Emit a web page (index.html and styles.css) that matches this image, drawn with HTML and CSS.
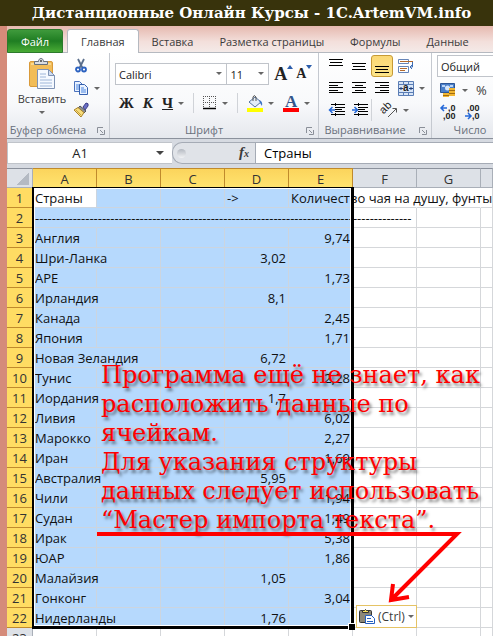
FILE: index.html
```html
<!DOCTYPE html>
<html lang="ru">
<head>
    <meta charset="UTF-8">
    <meta name="viewport" content="width=device-width, initial-scale=1.0">
    <title>Дистанционные Онлайн Курсы</title>
    <link rel="stylesheet" href="styles.css">
</head>
<body>
    <h1 class="banner">Дистанционные Онлайн Курсы - 1C.ArtemVM.info</h1>

    <div class="window">
        <nav class="tabs">
            <button class="tab tab-file">Файл</button>
            <button class="tab tab-active">Главная</button>
            <button class="tab">Вставка</button>
            <button class="tab">Разметка страницы</button>
            <button class="tab">Формулы</button>
            <button class="tab">Данные</button>
        </nav>

        <div class="ribbon">
            <section class="group group-clipboard">
                <div class="group-body">
                    <button class="paste">
                        <svg width="28" height="32" viewBox="0 0 28 32">
                            <rect x="1.500" y="3.500" width="23" height="25" rx="1.500" fill="#f2bd58" stroke="#d99a3a"/>
                            <path d="M3 5h20v2H3z" fill="#f9d78c"/>
                            <path d="M6.500 6.500v-3h4c0-4 5-4 5 0h4v3z" fill="#d9dde2" stroke="#66707c"/>
                            <circle cx="13" cy="3" r="1" fill="#444"/>
                            <path d="M9.500 11.500h11l6 6v13h-17z" fill="#f5f9ff" stroke="#7f93b5"/>
                            <path d="M20.500 11.500v6h6z" fill="#cfdcf0" stroke="#7f93b5"/>
                            <path d="M12 16h6M12 19h6M12 22h12M12 25h12M12 28h12" stroke="#9fb6d8"/>
                        </svg>
                        <span>Вставить</span>
                        <i class="arrow"></i>
                    </button>
                    <div class="clip-tools">
                        <button class="tool" aria-label="Вырезать">
                            <svg width="16" height="16" viewBox="0 0 16 16">
                                <path d="M5 1l4.500 9M11 1L6.500 10" stroke="#5b6f8c" stroke-width="1.800" fill="none"/>
                                <circle cx="5" cy="11.500" r="2" fill="none" stroke="#2c62c0" stroke-width="1.800"/>
                                <circle cx="11" cy="11.500" r="2" fill="none" stroke="#2c62c0" stroke-width="1.800"/>
                            </svg>
                        </button>
                        <button class="tool" aria-label="Копировать">
                            <svg width="16" height="16" viewBox="0 0 16 16">
                                <path d="M1.500 1.500h5l3 3v7h-8z" fill="#eaf2ff" stroke="#4a72bd"/>
                                <path d="M3 5h4M3 7h4M3 9h3" stroke="#4a86e0"/>
                                <path d="M6.500 4.500h5l3 3v7h-8z" fill="#eaf2ff" stroke="#3560ae"/>
                                <path d="M8 8h3M8 10h5M8 12h5" stroke="#4a86e0"/>
                            </svg>
                            <i class="arrow"></i>
                        </button>
                        <button class="tool" aria-label="Формат по образцу">
                            <svg width="16" height="16" viewBox="0 0 16 16">
                                <path d="M10 5l3-4q3 0 2 3l-3 4z" fill="#6a6fc4" stroke="#3d3f8a"/>
                                <path d="M7 4l6 5-2 2-6-5z" fill="#8a8f99" stroke="#555"/>
                                <path d="M5 5.500l6 5-3 4.500-7-7z" fill="#f7dc7a" stroke="#a98229"/>
                                <path d="M3 8l5 5" stroke="#c9a23f"/>
                            </svg>
                        </button>
                    </div>
                </div>
                <footer class="group-label">Буфер обмена
                    <svg class="launcher" width="8" height="8" viewBox="0 0 8 8"><path d="M.5 6V.5H6M3 3l3 3M7.500 3v4.500H3" fill="none" stroke="#8a8f98"/></svg>
                </footer>
            </section>

            <section class="group group-font">
                <div class="group-body rows">
                    <div class="row font-row">
                        <span class="combo combo-font"><select aria-label="Шрифт"><option>Calibri</option></select></span>
                        <span class="combo combo-size"><select aria-label="Размер шрифта"><option>11</option></select></span>
                        <button class="tool letter grow" aria-label="Увеличить размер">A<svg width="6" height="4" viewBox="0 0 6 4"><path d="M0 4l3-4 3 4z" fill="#2b5dab"/></svg></button>
                        <button class="tool letter shrink" aria-label="Уменьшить размер">A<svg width="6" height="4" viewBox="0 0 6 4"><path d="M0 0l3 4 3-4z" fill="#2b5dab"/></svg></button>
                    </div>
                    <div class="row style-row">
                        <button class="tool letter"><b>Ж</b></button>
                        <button class="tool letter"><b><em>К</em></b></button>
                        <button class="tool letter"><b><u>Ч</u></b><i class="arrow"></i></button>
                        <span class="sep"></span>
                        <button class="tool" aria-label="Границы">
                            <svg width="14" height="14" viewBox="0 0 14 14">
                                <path d="M.5 0v13M6.500 0v13M12.500 0v13M0 .5h13M0 6.500h13" stroke="#555" stroke-dasharray="1 1"/>
                                <path d="M0 12.500h13" stroke="#000" stroke-width="1.500"/>
                            </svg>
                            <i class="arrow"></i>
                        </button>
                        <span class="sep"></span>
                        <button class="tool" aria-label="Цвет заливки">
                            <svg width="16" height="17" viewBox="0 0 16 17">
                                <path d="M2 7l6-5 6 5-6 5z" fill="#e3edf8" stroke="#56749f"/>
                                <path d="M6 6V2q1-3 3 0v4" fill="none" stroke="#555"/>
                                <path d="M12 5q4 1 3 6l-2-3z" fill="#3d74c4"/>
                                <path d="M0 13h16v4H0z" fill="#ff0"/>
                            </svg>
                            <i class="arrow"></i>
                        </button>
                        <button class="tool color-tool" aria-label="Цвет текста"><span class="font-color">A</span><i class="arrow"></i></button>
                    </div>
                </div>
                <footer class="group-label">Шрифт
                    <svg class="launcher" width="8" height="8" viewBox="0 0 8 8"><path d="M.5 6V.5H6M3 3l3 3M7.500 3v4.500H3" fill="none" stroke="#8a8f98"/></svg>
                </footer>
            </section>

            <section class="group group-align">
                <div class="group-body align-grid">
                    <button class="tool" aria-label="По верхнему краю"><svg width="14" height="16" viewBox="0 0 14 16"><path d="M0 1.500h14M1 4.500h12M0 7.500h14" stroke="#000"/></svg></button>
                    <button class="tool" aria-label="По середине"><svg width="14" height="16" viewBox="0 0 14 16"><path d="M0 5.500h14M1 8.500h12M0 11.500h14" stroke="#000"/></svg></button>
                    <button class="tool tool-on" aria-label="По нижнему краю"><svg width="14" height="16" viewBox="0 0 14 16"><path d="M0 8.500h14M1 11.500h12M0 14.500h14" stroke="#000"/></svg></button>
                    <button class="tool" aria-label="Перенос текста">
                        <svg width="16" height="16" viewBox="0 0 16 16">
                            <path d="M.5 1.500h10v4H.5zM.5 8.500h10v6H.5z" fill="#fff" stroke="#6685b8"/>
                            <path d="M2 3.500h13M2 10.500h7M2 12.500h5" stroke="#b46a2c"/>
                            <path d="M14.500 4v5h-2M14 7l-2 2 2 2" fill="none" stroke="#3d6cb4"/>
                        </svg>
                    </button>
                    <button class="tool" aria-label="По левому краю"><svg width="14" height="12" viewBox="0 0 14 12"><path d="M0 .5h14M0 3.500h9M0 5.500h14M0 8.500h9M0 10.500h14" stroke="#000"/></svg></button>
                    <button class="tool" aria-label="По центру"><svg width="14" height="12" viewBox="0 0 14 12"><path d="M0 .5h14M3 3.500h8M0 5.500h14M3 8.500h8M0 10.500h14" stroke="#000"/></svg></button>
                    <button class="tool" aria-label="По правому краю"><svg width="14" height="12" viewBox="0 0 14 12"><path d="M0 .5h14M5 3.500h9M0 5.500h14M5 8.500h9M0 10.500h14" stroke="#000"/></svg></button>
                    <button class="tool" aria-label="Объединить">
                        <svg width="16" height="15" viewBox="0 0 16 15">
                            <path d="M.5.500h15v14H.5z" fill="#d8e5f7" stroke="#5a7db5"/>
                            <path d="M5.500 0v3M10.500 0v3M5.500 12v3M10.500 12v3M0 3.500h16M0 11.500h16" stroke="#5a7db5"/>
                            <path d="M1 7.500h4M11 7.500h4M3 6v3M13 6v3" stroke="#23407c"/>
                            <text x="5" y="10" class="icon-text">a</text>
                        </svg>
                        <i class="arrow"></i>
                    </button>
                    <button class="tool" aria-label="Уменьшить отступ"><svg width="16" height="14" viewBox="0 0 16 14"><path d="M2 1.500h14M7 4.500h9M7 6.500h6M7 8.500h9M2 11.500h14" stroke="#000"/><path d="M6.500 0v14" stroke="#000" stroke-dasharray="1 1"/><path d="M6 7H1M3.500 4L.5 7l3 3" fill="none" stroke="#2468d8" stroke-width="1.500"/></svg></button>
                    <button class="tool" aria-label="Увеличить отступ"><svg width="16" height="14" viewBox="0 0 16 14"><path d="M2 1.500h14M7 4.500h9M7 6.500h6M7 8.500h9M2 11.500h14" stroke="#000"/><path d="M6.500 0v14" stroke="#000" stroke-dasharray="1 1"/><path d="M0 7h5M2.500 4l3 3-3 3" fill="none" stroke="#2468d8" stroke-width="1.500"/></svg></button>
                    <button class="tool orientation" aria-label="Ориентация">
                        <svg width="17" height="18" viewBox="0 0 17 18">
                            <text x="2" y="12" class="icon-text icon-ab" transform="rotate(-45 4 12)">ab</text>
                            <path d="M7 16l8-8M11.500 7.500H15.500v4" fill="none" stroke="#555"/>
                        </svg>
                        <i class="arrow"></i>
                    </button>
                </div>
                <footer class="group-label">Выравнивание
                    <svg class="launcher" width="8" height="8" viewBox="0 0 8 8"><path d="M.5 6V.5H6M3 3l3 3M7.500 3v4.500H3" fill="none" stroke="#8a8f98"/></svg>
                </footer>
            </section>

            <section class="group group-number">
                <div class="group-body number-body">
                    <select class="format" aria-label="Числовой формат"><option>Общий</option></select>
                    <div class="row">
                        <button class="tool" aria-label="Финансовый формат">
                            <svg width="17" height="16" viewBox="0 0 17 16">
                                <path d="M.5 1.500h14v9H.5z" fill="#4a7fc9" stroke="#2c5596"/>
                                <path d="M2 3h3v2H2zM10 3h3v2h-3z" fill="#b9d3f5"/>
                                <circle cx="7.500" cy="6" r="2.500" fill="#d6e6fb"/>
                                <path d="M9 6h6v8H9zM3 11h6v4H3z" fill="#f2b632"/>
                                <path d="M9 8.500h6M9 11.500h6M3 13.500h6" stroke="#a06c12"/>
                            </svg>
                            <i class="arrow"></i>
                        </button>
                        <button class="tool percent">%</button>
                    </div>
                    <div class="row">
                        <button class="tool" aria-label="Увеличить разрядность">
                            <svg width="17" height="16" viewBox="0 0 17 16"><path d="M1 4h6M4 1L1 4l3 3" fill="none" stroke="#2468d8" stroke-width="1.500"/><text x="8" y="7" class="icon-text icon-digit">,0</text><text x="3" y="15" class="icon-text icon-digit">,00</text></svg>
                        </button>
                        <button class="tool" aria-label="Уменьшить разрядность">
                            <svg width="17" height="16" viewBox="0 0 17 16"><text x="2" y="7" class="icon-text icon-digit">,00</text><path d="M0 12h6M3 9l3 3-3 3" fill="none" stroke="#2468d8" stroke-width="1.500"/><text x="7" y="15" class="icon-text icon-digit">,0</text></svg>
                        </button>
                    </div>
                </div>
                <footer class="group-label">Число</footer>
            </section>
        </div>

        <div class="formula-bar">
            <span class="combo name-box"><input type="text" value="A1" aria-label="Имя"></span>
            <span class="fx-area"><span class="knob"></span><button class="fx" aria-label="Вставить функцию">f<sub>x</sub></button></span>
            <input class="formula" type="text" value="Страны" aria-label="Строка формул">
        </div>

        <main class="sheet">
            <table class="grid">
                <colgroup><col class="col-head"><col class="col"><col class="col"><col class="col"><col class="col"><col class="col"><col class="col"><col class="col"><col></colgroup>
                <thead>
                    <tr><th class="corner"></th><th class="on">A</th><th class="on">B</th><th class="on">C</th><th class="on">D</th><th class="on">E</th><th>F</th><th>G</th><th></th></tr>
                </thead>
                <tbody class="selected">
                    <tr><th>1</th><td class="active">Страны</td><td></td><td></td><td>-&gt;</td><td class="spill">Количество чая на душу, фунты</td><td class="spill"></td><td class="spill"></td><td></td></tr>
                    <tr><th>2</th><td class="spill">------------------------------------------------------------------------------------------</td><td class="spill"></td><td class="spill"></td><td class="spill"></td><td class="spill"></td><td></td><td></td><td></td></tr>
                    <tr><th>3</th><td>Англия</td><td></td><td></td><td></td><td class="num">9,74</td><td></td><td></td><td></td></tr>
                    <tr><th>4</th><td class="spill">Шри-Ланка</td><td></td><td></td><td class="num">3,02</td><td></td><td></td><td></td><td></td></tr>
                    <tr><th>5</th><td>АРЕ</td><td></td><td></td><td></td><td class="num">1,73</td><td></td><td></td><td></td></tr>
                    <tr><th>6</th><td class="spill">Ирландия</td><td></td><td></td><td class="num">8,1</td><td></td><td></td><td></td><td></td></tr>
                    <tr><th>7</th><td>Канада</td><td></td><td></td><td></td><td class="num">2,45</td><td></td><td></td><td></td></tr>
                    <tr><th>8</th><td>Япония</td><td></td><td></td><td></td><td class="num">1,71</td><td></td><td></td><td></td></tr>
                    <tr><th>9</th><td class="spill">Новая Зеландия</td><td></td><td></td><td class="num">6,72</td><td></td><td></td><td></td><td></td></tr>
                    <tr><th>10</th><td>Тунис</td><td></td><td></td><td></td><td class="num">2,28</td><td></td><td></td><td></td></tr>
                    <tr><th>11</th><td class="spill">Иордания</td><td></td><td></td><td class="num">1,7</td><td></td><td></td><td></td><td></td></tr>
                    <tr><th>12</th><td>Ливия</td><td></td><td></td><td></td><td class="num">6,02</td><td></td><td></td><td></td></tr>
                    <tr><th>13</th><td>Марокко</td><td></td><td></td><td></td><td class="num">2,27</td><td></td><td></td><td></td></tr>
                    <tr><th>14</th><td>Иран</td><td></td><td></td><td></td><td class="num">1,69</td><td></td><td></td><td></td></tr>
                    <tr><th>15</th><td class="spill">Австралия</td><td></td><td></td><td class="num">5,95</td><td></td><td></td><td></td><td></td></tr>
                    <tr><th>16</th><td>Чили</td><td></td><td></td><td></td><td class="num">1,94</td><td></td><td></td><td></td></tr>
                    <tr><th>17</th><td>Судан</td><td></td><td></td><td></td><td class="num">1,49</td><td></td><td></td><td></td></tr>
                    <tr><th>18</th><td>Ирак</td><td></td><td></td><td></td><td class="num">5,38</td><td></td><td></td><td></td></tr>
                    <tr><th>19</th><td>ЮАР</td><td></td><td></td><td></td><td class="num">1,86</td><td></td><td></td><td></td></tr>
                    <tr><th>20</th><td class="spill">Малайзия</td><td></td><td></td><td class="num">1,05</td><td></td><td></td><td></td><td></td></tr>
                    <tr><th>21</th><td>Гонконг</td><td></td><td></td><td></td><td class="num">3,04</td><td></td><td></td><td></td></tr>
                    <tr><th>22</th><td class="spill">Нидерланды</td><td></td><td></td><td class="num">1,76</td><td></td><td></td><td></td><td></td></tr>
                </tbody>
                <tbody>
                    <tr><th>23</th><td></td><td></td><td></td><td></td><td></td><td></td><td></td><td></td></tr>
                </tbody>
            </table>

            <div class="selection"></div>

            <button class="paste-tag">
                <svg width="16" height="16" viewBox="0 0 16 16">
                    <rect x=".5" y="1.500" width="12" height="12" rx="1" fill="#8b8778" stroke="#333"/>
                    <path d="M3.500 3.500v-2h2l1-1 1 1h2v2z" fill="#f6df5e" stroke="#333"/>
                    <path d="M6.500 6.500h6l3 3v5h-9z" fill="#fff" stroke="#2460c0"/>
                    <path d="M8 9.500h4M8 12.500h6" stroke="#2460c0"/>
                </svg>
                (Ctrl)<i class="arrow"></i>
            </button>

            <p class="note">Программа ещё не знает, как<br>расположить данные по<br>ячейкам.<br>Для указания структуры<br>данных следует использовать<br>“Мастер импорта текста”.</p>
            <svg class="pointer" width="364" height="76" viewBox="0 0 364 76">
                <path d="M0 4h360L294 70M296 54l-2 16 18-3" fill="none" stroke="#f00" stroke-width="4"/>
            </svg>
        </main>
    </div>
</body>
</html>
```
FILE: styles.css
```css
* {
    box-sizing: border-box;
}

body {
    margin: 0;
    height: 100vh;
    overflow: hidden;
    background-color: #d58b7a;
    font-family: "Open Sans", "Noto Sans", sans-serif;
    font-size: 11px;
    color: #3b3b3b;
}

button,
input,
select {
    font: inherit;
    color: inherit;
    margin: 0;
    padding: 0;
    border: 0;
    background: none;
    border-radius: 0;
    appearance: none;
}

svg {
    display: block;
    flex: none;
    overflow: visible;
}

.banner {
    margin: 0;
    height: 26px;
    padding-left: 10px;
    line-height: 26px;
    background-color: #38330c;
    color: #fff;
    font-family: "DejaVu Serif", serif;
    font-size: 15px;
    font-weight: bold;
    text-align: center;
    white-space: nowrap;
}

.window {
    padding-left: 7px;
}

/* tabs */
.tabs {
    display: flex;
    height: 27px;
    padding-top: 3px;
    background: linear-gradient(#e6b9af, #f3dfdb 60%, #f4eae8);
    border-bottom: 1px solid #b5b9c0;
}

.tab {
    flex: none;
    padding: 0 13px;
    height: 24px;
    white-space: nowrap;
}

.tab-file {
    width: 56px;
    margin-right: 4px;
    padding: 0;
    border: 1px solid #2c7a2c;
    border-radius: 3px 3px 0 0;
    background: linear-gradient(#3f9a3c, #1f7d22 50%, #49ab35);
    color: #fff;
}

.tab-active {
    background-color: #fff;
    border: 1px solid #b5b9c0;
    border-bottom: 0;
    border-radius: 3px 3px 0 0;
}

/* ribbon */
.ribbon {
    display: flex;
    height: 86px;
    overflow: hidden;
    background: linear-gradient(#fff, #f8f9fb 60%, #e5e8ed);
    border-bottom: 1px solid #8b919c;
}

.group {
    display: flex;
    flex-direction: column;
    flex: none;
    border-right: 1px solid #c5c9d0;
}

.group-clipboard {
    width: 103px;
}

.group-font {
    width: 209px;
}

.group-align {
    width: 113px;
}

.group-number {
    width: 120px;
    border-right: 0;
}

.group-body {
    flex: 1;
    display: flex;
}

.group-label {
    position: relative;
    height: 16px;
    line-height: 16px;
    padding-right: 20px;
    text-align: center;
    white-space: nowrap;
    color: #69707c;
}

.group-number .group-label {
    padding-right: 44px;
}

.launcher {
    position: absolute;
    right: 4px;
    top: 5px;
}

.arrow {
    flex: none;
    border: 3px solid transparent;
    border-top-color: #666;
    border-bottom: 0;
}

.row {
    display: flex;
    align-items: center;
}

.tool {
    display: flex;
    align-items: center;
    gap: 5px;
}

.paste {
    display: flex;
    flex-direction: column;
    align-items: center;
    width: 66px;
    padding: 5px 0 0 4px;
    line-height: 18px;
}

.paste .arrow {
    margin-top: 3px;
}

.clip-tools {
    display: flex;
    flex-direction: column;
    gap: 6px;
    padding-top: 5px;
}

.rows {
    flex-direction: column;
    gap: 7px;
    padding: 10px 0 0 5px;
}

.combo {
    position: relative;
    display: flex;
    height: 22px;
    background-color: #fff;
    border: 1px solid #c0c4ca;
}

.combo select,
.combo input {
    width: 100%;
    padding-left: 3px;
    color: #222;
}

.combo::after {
    content: "";
    position: absolute;
    right: 4px;
    top: 8px;
    border: 3px solid transparent;
    border-top-color: #666;
    border-bottom: 0;
}

.combo-font {
    width: 113px;
}

.combo-size {
    width: 43px;
    margin-left: -1px;
    margin-right: 5px;
}

.letter {
    font-family: "Liberation Serif", serif;
    font-size: 15px;
    color: #222;
}

.grow,
.shrink {
    align-items: flex-start;
    gap: 0;
    width: 22px;
    font-weight: bold;
    line-height: 22px;
}

.grow {
    font-size: 18px;
}

.shrink {
    font-size: 14px;
}

.grow svg,
.shrink svg {
    margin-top: 2px;
}

.style-row {
    gap: 9px;
    height: 22px;
    padding-left: 4px;
}

.sep {
    width: 1px;
    height: 20px;
    background-color: #d0d3d8;
}

.font-color {
    width: 16px;
    height: 17px;
    line-height: 14px;
    border-bottom: 4px solid #f00;
    font-family: "Liberation Serif", serif;
    font-size: 17px;
    font-weight: bold;
    color: #34558b;
}

.align-grid {
    display: grid;
    grid-template-columns: repeat(3, 23px) 30px;
    grid-template-rows: repeat(3, 22px);
    padding: 2px 0 0 6px;
}

.align-grid .tool {
    width: 22px;
    height: 22px;
    padding-left: 4px;
}

.align-grid .tool-on {
    padding-left: 3px;
    border: 1px solid #c79a35;
    border-radius: 3px;
    background: linear-gradient(#fbd874, #fde58a);
}

.align-grid .orientation {
    grid-column: 3 / 5;
    width: 44px;
    padding-left: 9px;
    border-left: 1px solid #d0d3d8;
}

.icon-text {
    font-family: "Liberation Sans", sans-serif;
    font-size: 10px;
    font-weight: bold;
    fill: #222;
}

.icon-ab {
    font-size: 11px;
    font-weight: normal;
}

.icon-digit {
    font-size: 9px;
}

.number-body {
    flex-direction: column;
    gap: 4px;
    padding: 2px 0 0 5px;
}

.number-body .row {
    gap: 8px;
    height: 18px;
    padding-left: 3px;
}

.format {
    height: 22px;
    padding-left: 3px;
    border: 1px solid #c0c4ca;
    background-color: #fff;
    color: #222;
}

.percent {
    font-size: 13px;
}

/* formula bar */
.formula-bar {
    display: flex;
    height: 29px;
    padding-top: 3px;
    background-color: #d6dae1;
    font-size: 13px;
}

.name-box {
    width: 165px;
    height: 22px;
    border-right: 0;
}

.name-box input {
    padding: 0 20px 0 0;
    text-align: center;
}

.name-box::after {
    right: 8px;
    border-width: 4px 4px 0;
    border-top-color: #444;
}

.fx-area {
    display: flex;
    align-items: center;
    justify-content: space-between;
    width: 83px;
    height: 22px;
    padding: 0 6px 0 4px;
    border: 1px solid #a5abb5;
    border-right: 0;
    border-radius: 10px 0 0 10px;
    background-color: #e0e3e8;
}

.knob {
    width: 9px;
    height: 9px;
    border-radius: 50%;
    background: linear-gradient(#b4b9c1, #f2f3f5);
}

.fx {
    font-family: "Liberation Serif", serif;
    font-size: 15px;
    font-style: italic;
    font-weight: bold;
    line-height: 16px;
}

.fx sub {
    font-size: 10px;
    vertical-align: baseline;
}

.formula {
    flex: 1;
    min-width: 0;
    height: 22px;
    padding-left: 8px;
    border: 1px solid #a5abb5;
    border-right: 0;
    background-color: #fff;
    color: #000;
}

/* worksheet */
.sheet {
    position: relative;
}

.grid {
    width: 100%;
    table-layout: fixed;
    border-collapse: separate;
    border-spacing: 0;
    background-color: #fff;
    font-size: 13px;
    color: #111;
}

.col-head {
    width: 26px;
}

.col {
    width: 64px;
}

.grid th,
.grid td {
    height: 20px;
    padding: 2px 2px 0;
    line-height: 17px;
    white-space: nowrap;
    border-right: 1px solid #d5d7da;
    border-bottom: 1px solid #d5d7da;
}

.grid th {
    padding: 2px 0 0;
    background-color: #dde1e7;
    border-color: #a9afb8;
    font-weight: normal;
    color: #333;
}

.grid thead th {
    border-top: 1px solid #8b919c;
    line-height: 16px;
}

.grid thead .on {
    background: linear-gradient(#fbd45c, #ffe36f);
    border-color: #c08a2c;
}

.grid .corner {
    background: linear-gradient(135deg, transparent 50%, #b4bac3 50%) 10px 4px / 12px 12px no-repeat #dde1e7;
}

.grid .selected th {
    background-color: #ffdc63;
    border-color: #c08a2c;
}

.selected td:nth-child(-n+6) {
    background-color: #b6d9fd;
    border-color: #ccd5df;
}

.grid .selected .active {
    background-color: #fff;
}

.grid .selected .spill {
    border-right-color: transparent;
}

.grid .num {
    text-align: right;
}

.selection {
    position: absolute;
    left: 25px;
    top: 19px;
    width: 322px;
    height: 442px;
    border: solid #000;
    border-width: 1px 3px 3px 2px;
    box-shadow: inset 0 0 0 1px #fff;
}

.selection::after {
    content: "";
    position: absolute;
    right: -4px;
    bottom: -4px;
    width: 6px;
    height: 6px;
    background-color: #000;
    border: solid #fff;
    border-width: 1px 0 0 1px;
}

.paste-tag {
    position: absolute;
    left: 349px;
    top: 437px;
    display: flex;
    align-items: center;
    gap: 3px;
    width: 61px;
    height: 23px;
    padding-left: 2px;
    background-color: #fff;
    border: 1px solid #e5c365;
    font-size: 12px;
}

.note {
    position: absolute;
    left: 94px;
    top: 193px;
    margin: 0;
    font-family: "DejaVu Serif", serif;
    font-size: 24px;
    line-height: 29px;
    white-space: nowrap;
    color: #f00;
    text-shadow: 2px 3px 3px rgba(0, 0, 0, 0.5);
}

.pointer {
    position: absolute;
    left: 90px;
    top: 362px;
}
```
